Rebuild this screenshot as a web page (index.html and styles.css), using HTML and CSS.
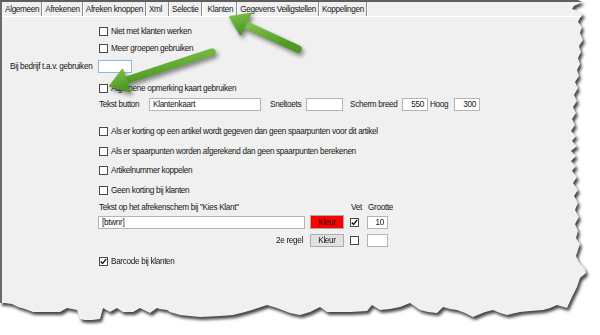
FILE: index.html
```html
<!DOCTYPE html>
<html>
<head>
<meta charset="utf-8">
<link rel="stylesheet" href="styles.css">
</head>
<body>
<div class="page">
  <div class="sheet">
    <div class="panel">
      <div class="tabs">
        <span class="tab">Algemeen</span>
        <span class="tab">Afrekenen</span>
        <span class="tab">Afreken knoppen</span>
        <span class="tab tab-xml">Xml</span>
        <span class="tab">Selectie</span>
        <span class="tab active">Klanten</span>
        <span class="tab">Gegevens Veiligstellen</span>
        <span class="tab">Koppelingen</span>
      </div>
      <div class="content">
        <div class="row r1"><span class="cb"></span><span>Niet met klanten werken</span></div>
        <div class="row r2"><span class="cb"></span><span>Meer groepen gebruiken</span></div>
        <div class="row r3 flush"><span class="lbl-bij">Bij bedrijf t.a.v. gebruiken</span><span class="inp inp-bij focus"></span></div>
        <div class="row r4"><span class="cb"></span><span>Algemene opmerking kaart gebruiken</span></div>
        <div class="row r5">
          <span class="lbl lbl-tekst">Tekst button</span><span class="inp inp-tekst">Klantenkaart</span>
          <span class="lbl lbl-snel">Sneltoets</span><span class="inp inp-snel"></span>
          <span class="lbl lbl-scherm">Scherm breed</span><span class="inp inp-num num">550</span>
          <span class="lbl lbl-hoog">Hoog</span><span class="inp inp-num num">300</span>
        </div>
        <div class="row r6"><span class="cb"></span><span>Als er korting op een artikel wordt gegeven dan geen spaarpunten voor dit artikel</span></div>
        <div class="row r7"><span class="cb"></span><span>Als er spaarpunten worden afgerekend dan geen spaarpunten berekenen</span></div>
        <div class="row r8"><span class="cb"></span><span>Artikelnummer koppelen</span></div>
        <div class="row r9"><span class="cb"></span><span>Geen korting bij klanten</span></div>
        <div class="grid g-head">
          <span>Tekst op het afrekenschem bij "Kies Klant"</span>
          <span></span>
          <span>Vet</span>
          <span>Grootte</span>
        </div>
        <div class="grid g-r1">
          <span class="inp inp-wide">[btwnr]</span>
          <span class="btn btn-red">Kleur</span>
          <span class="cb checked"><svg viewBox="0 0 9 9" width="7" height="7"><path d="M1 4.6 L3.3 7 L8 1.2" fill="none" stroke="#111" stroke-width="1.7"/></svg></span>
          <span class="inp inp-size num">10</span>
        </div>
        <div class="grid g-r2">
          <span class="lbl-2e">2e regel</span>
          <span class="btn">Kleur</span>
          <span class="cb"></span>
          <span class="inp inp-size"></span>
        </div>
        <div class="row r12"><span class="cb checked"><svg viewBox="0 0 9 9" width="7" height="7"><path d="M1 4.6 L3.3 7 L8 1.2" fill="none" stroke="#111" stroke-width="1.7"/></svg></span><span>Barcode bij klanten</span></div>
      </div>
    </div>
  </div>
  <svg class="arrows" width="600" height="335" viewBox="0 0 600 335">
    <defs>
      <linearGradient id="g1" x1="0" y1="0" x2="0.3" y2="1">
        <stop offset="0" stop-color="#7cc14a"/>
        <stop offset="1" stop-color="#4f9826"/>
      </linearGradient>
    </defs>
    <g fill="url(#g1)" stroke="url(#g1)" stroke-linejoin="round">
      <line x1="298" y1="49" x2="246" y2="25" stroke-width="7.5" stroke-linecap="round"/>
      <polygon points="230,17 250.5,13.8 240.5,34.5" stroke-width="2"/>
      <line x1="212" y1="52" x2="127" y2="80" stroke-width="7.5" stroke-linecap="round"/>
      <polygon points="110,86 129.8,91.4 122.4,69.8" stroke-width="2"/>
    </g>
  </svg>
</div>
</body>
</html>
```
FILE: styles.css
```css
html, body {
  margin: 0;
  background: #fff;
}
body {
  font-family: "Liberation Sans", Arial, sans-serif;
  font-size: 8.2px;
  color: #161616;
  letter-spacing: -0.32px;
}
.page {
  position: relative;
  width: 600px;
  height: 335px;
  overflow: hidden;
}
.sheet {
  filter: drop-shadow(2px 3px 1.5px rgba(0, 0, 0, 0.72));
}
.panel {
  box-sizing: border-box;
  width: 600px;
  height: 335px;
  background: #f0f0f0;
  border-top: 2px solid #5e5e5e;
  border-left: 2px solid #6a6a6a;
  clip-path: polygon(0 0, 578px 0, 582px 2px, 574px 6px, 572px 9px, 578px 11px, 583px 14px, 580px 18px, 578px 22px, 582px 27px, 580px 33px, 583px 40px, 579px 46px, 581px 52px, 578px 58px, 580px 64px, 577px 70px, 579px 76px, 575px 82px, 578px 88px, 574px 95px, 577px 101px, 573px 107px, 576px 113px, 572px 119px, 575px 125px, 571px 131px, 576px 136px, 572px 141px, 577px 146px, 571px 151px, 576px 156px, 571px 161px, 576px 166px, 572px 171px, 577px 177px, 573px 183px, 578px 190px, 574px 196px, 578px 203px, 575px 210px, 579px 217px, 575px 224px, 578px 231px, 576px 238px, 580px 244px, 578px 250px, 576px 256px, 579px 262px, 585px 269px, 586px 273px, 580px 278px, 577px 287px, 572px 297px, 567px 308px, 557px 305px, 550px 308px, 543px 310px, 530px 311px, 520px 312px, 507px 315px, 500px 313px, 493px 310px, 485px 312px, 473px 317px, 465px 313px, 457px 310px, 450px 309px, 443px 307px, 437px 313px, 428px 312px, 420px 310px, 410px 303px, 400px 307px, 390px 309px, 380px 310px, 372px 305px, 367px 311px, 350px 312px, 335px 312px, 327px 312px, 320px 307px, 310px 312px, 300px 315px, 290px 313px, 277px 308px, 267px 305px, 255px 309px, 245px 312px, 233px 315px, 220px 316px, 200px 317px, 190px 316px, 180px 315px, 170px 312px, 167px 310px, 160px 309px, 157px 308px, 150px 313px, 140px 308px, 133px 312px, 123px 312px, 117px 308px, 110px 312px, 103px 308px, 100px 319px, 92px 320px, 85px 320px, 80px 319px, 77px 310px, 67px 308px, 60px 312px, 45px 312px, 33px 312px, 25px 309px, 18px 307px, 12px 304px, 5px 303px, 0 303px);
}

/* tabs */
.tabs {
  display: flex;
  height: 14px;
  border-bottom: 1px solid #fff;
  padding-left: 1px;
}
.tab {
  display: flex;
  align-items: center;
  padding: 0 2px 0 2px;
  border-right: 1px solid #8c8c8c;
  box-shadow: 1px 0 0 #fff;
  margin-right: 1px;
  white-space: nowrap;
}
.tab-xml {
  padding-right: 6px;
}
.tab.active {
  padding: 0 3px 0 5px;
  background: #f4f4f4;
}

/* content rows */
.content {
  padding-left: 8px;
}
.row {
  display: flex;
  align-items: center;
  height: 12px;
  margin-left: 89px;
  white-space: nowrap;
}
.row.flush {
  margin-left: 0;
  height: 13px;
}
.r1 { margin-top: 8px; }
.r2 { margin-top: 5px; }
.r3 { margin-top: 6px; }
.r4 { margin-top: 9px; }
.r5 { margin-top: 4px; height: 13px; }
.r6 { margin-top: 14px; }
.r7 { margin-top: 8px; }
.r8 { margin-top: 7px; }
.r9 { margin-top: 8px; }
.r12 { margin-top: 8px; }

.cb {
  box-sizing: border-box;
  width: 9px;
  height: 9px;
  border: 1px solid #4a4a4a;
  background: #fff;
  margin-right: 3px;
  flex: none;
  display: flex;
  align-items: center;
  justify-content: center;
}
.cb svg { display: block; }

.inp {
  box-sizing: border-box;
  height: 13px;
  border: 1px solid #b4b4b4;
  background: #fff;
  padding: 0 3px;
  display: flex;
  align-items: center;
  flex: none;
  white-space: nowrap;
}
.inp.focus { border-color: #8db8e6; }
.inp.num { justify-content: flex-end; }

.lbl-bij { width: 88px; }
.inp-bij { width: 34px; }

.lbl { flex: none; }
.lbl-tekst { width: 50px; }
.inp-tekst { width: 112px; }
.lbl-snel { width: 36px; margin-left: 9px; }
.inp-snel { width: 37px; }
.lbl-scherm { width: 52px; margin-left: 7px; }
.inp-num { width: 26px; }
.lbl-hoog { width: 24px; margin-left: 2px; }

/* grid block */
.grid {
  display: grid;
  grid-template-columns: 212px 40px 17px 21px;
  align-items: center;
  margin-left: 88px;
  white-space: nowrap;
}
.g-head { margin-top: 6px; height: 10px; padding-left: 1px; }
.g-r1 { margin-top: 3px; height: 13px; }
.g-r2 { margin-top: 6px; height: 13px; }
.inp-wide { width: 207px; }
.inp-size { width: 21px; }
.lbl-2e {
  width: 207px;
  text-align: right;
  padding-right: 2px;
  box-sizing: border-box;
}
.btn {
  box-sizing: border-box;
  width: 34px;
  height: 13px;
  border: 1px solid #adadad;
  background: #e1e1e1;
  display: flex;
  align-items: center;
  justify-content: center;
}
.btn-red {
  background: #ff0000;
  border-color: #a8a8a8;
  height: 14px;
}

.arrows {
  position: absolute;
  left: 0;
  top: 0;
  filter: drop-shadow(2px 3px 2px rgba(0, 0, 0, 0.45));
}
```
